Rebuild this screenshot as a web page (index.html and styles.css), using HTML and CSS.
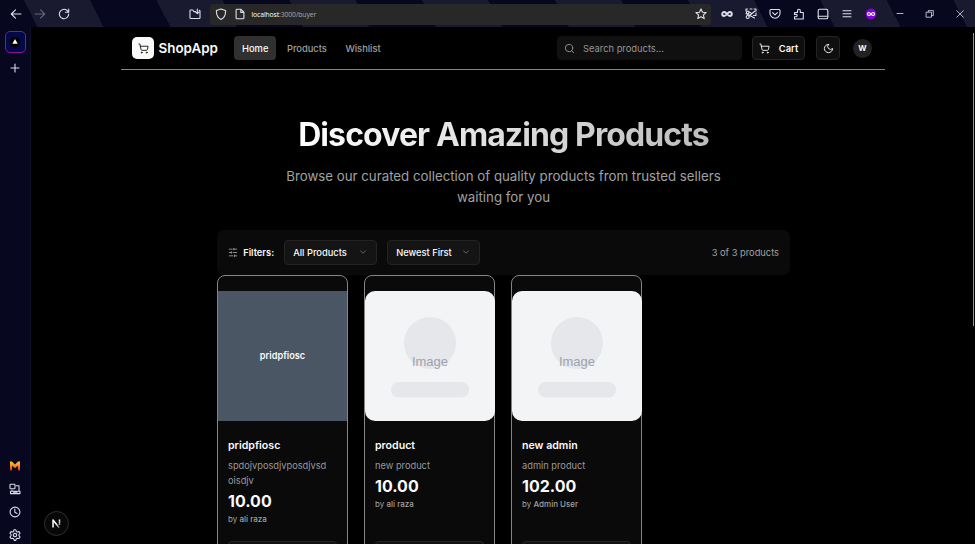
FILE: index.html
```html
<!DOCTYPE html>
<html lang="en">
<head>
<meta charset="utf-8">
<title>ShopApp</title>
<link rel="stylesheet" href="styles.css">
</head>
<body>
<div class="browser">
  <div class="toolbar">
    <div class="stripes"></div>
    <div class="nav-buttons">
      <svg class="ic" viewBox="0 0 12 12"><path d="M11 6H1.3M5.500 1.800 1.300 6l4.200 4.200"/></svg>
      <svg class="ic dim" viewBox="0 0 12 12"><path d="M1 6h9.700M6.500 1.800 10.700 6 6.500 10.200"/></svg>
      <svg class="ic" viewBox="0 0 12 12"><path d="M10.700 6A4.700 4.700 0 1 1 9 2.400L10.500 4M10.700 1v3.300H7.400"/></svg>
    </div>
    <svg class="ic folder" viewBox="0 0 12 12"><path d="M6.500 3.600H5L3.800 2H1.600q-.6 0-.6.7v7q0 .8.8.8h8.400q.8 0 .8-.8V3.200q0-.8-.8-.8M8.300 1v4.500M6.700 4.100l1.600 1.600 1.600-1.600"/></svg>
    <div class="address">
      <svg class="ic" viewBox="0 0 12 12"><path d="M6 .9 10.600 2.500C10.700 6.500 9.500 9.700 6 11.400 2.500 9.700 1.300 6.500 1.400 2.500z"/></svg>
      <svg class="ic" viewBox="0 0 12 12"><path d="M3 1.300h4L9.900 4.200v5.700q0 .9-.9.900H3q-.9 0-.9-.9V2.200q0-.9.900-.9zM6.800 1.500v2.900h2.900"/></svg>
      <span class="url"><b>localhost</b>:3000/buyer</span>
      <svg class="ic star" viewBox="0 0 12 12"><path d="m6 .9 1.500 3.300 3.600.4-2.700 2.400.8 3.600L6 8.800l-3.200 1.800.8-3.600L.9 4.600l3.600-.4z"/></svg>
    </div>
    <div class="extensions">
      <svg class="ic bold" viewBox="0 0 12 12"><path d="M6 6C4.600 4.300 4 4 3.200 4a2 2 0 0 0 0 4C4 8 4.600 7.700 6 6s2-2 2.800-2a2 2 0 0 1 0 4C8 8 7.400 7.700 6 6z"/></svg>
      <svg class="ic" viewBox="0 0 12 12"><path d="M2.500 1H1v2M5 1h2M9 1h2v2M11 5v2M1 5.500 9.500 10M4 8l6-5M4 4l2 1M8.500 7.500H11"/><circle cx="2.700" cy="4.400" r="1.300"/><circle cx="2.700" cy="9" r="1.500"/></svg>
      <svg class="ic" viewBox="0 0 12 12"><path d="M2 1.500h8q1 0 1 1v2.700a5 5 0 0 1-10 0V2.500q0-1 1-1zM3.600 4.600 6 6.900l2.400-2.300"/></svg>
      <svg class="ic" viewBox="0 0 12 12"><path d="M1.500 4.500h3V2.700a1.400 1.400 0 0 1 2.800 0v1.800h3V11H1.500V8.800H3a1.200 1.200 0 0 0 0-2.400H1.500z"/></svg>
      <svg class="ic" viewBox="0 0 12 12"><rect x="1.200" y="1.200" width="9.600" height="9.600" rx="1.300"/><path d="M1.200 8.200h9.600"/></svg>
      <svg class="ic" viewBox="0 0 12 12"><path d="M2 2.700h8M2 5.700h8M2 8.700h8"/></svg>
      <svg class="ic badge" viewBox="0 0 12 12"><circle class="purple" cx="6" cy="6" r="5.400"/><path d="M6 6C5 4.800 4.600 4.500 4 4.500a1.500 1.500 0 0 0 0 3C4.600 7.500 5 7.200 6 6s1.400-1.500 2-1.500a1.500 1.500 0 0 1 0 3C7.400 7.500 7 7.200 6 6z"/></svg>
    </div>
    <div class="window-buttons">
      <svg class="ic" viewBox="0 0 12 12"><path d="M3 5.500h6"/></svg>
      <svg class="ic" viewBox="0 0 12 12"><path d="M2.500 4.200h5v5h-5zM4.300 4V2.600h5v5H7.700"/></svg>
      <svg class="ic" viewBox="0 0 12 12"><path d="m2.800 2.700 6.500 6.500m0-6.500L2.800 9.200"/></svg>
    </div>
  </div>
  <div class="main">
    <aside class="sidebar">
      <div class="tab"><svg viewBox="0 0 12 12"><circle cx="6" cy="6" r="5.300"/><path d="m6 3 2.700 4.700H3.300z"/></svg></div>
      <svg class="ic plus" viewBox="0 0 12 12"><path d="M6 2v8M2 6h8"/></svg>
      <div class="tools">
        <svg class="mark" viewBox="0 0 12 12"><defs><linearGradient id="fire" x2="0" y2="1"><stop stop-color="#ffc629"/><stop offset=".5" stop-color="#ff8b22"/><stop offset="1" stop-color="#dc2518"/></linearGradient></defs><path d="M1 1.500h1.900L6 4.600l3.100-3.100H11v9H8.900V5.600L6 8.300 3.100 5.600v4.900H1z"/></svg>
        <svg class="ic" viewBox="0 0 12 12"><rect x="1" y="1.300" width="5" height="4.500" rx=".7"/><path d="M7.200 2.700H10v5.500H3V7M1.500 8.200v2.400H11V8.200zM4.500 9.300h3.500"/></svg>
        <svg class="ic" viewBox="0 0 12 12"><circle cx="6" cy="6" r="4.900"/><path d="M5.800 3v3.300L8 7.500"/></svg>
        <svg class="ic" viewBox="0 0 12 12"><path d="m4.800 1 .4-.2h1.600l.5 1.600 1.100.6 1.600-.4 1 1.700L9.900 5.500v1.200L11 7.900l-.9 1.600-1.700-.3-1.100.6-.5 1.600H5.200l-.5-1.600-1.100-.6-1.700.3L1 7.900l1.100-1.200V5.500L1 4.300l1-1.700 1.600.4 1.100-.6z"/><circle cx="6" cy="6.100" r="1.700"/></svg>
      </div>
    </aside>
    <div class="page">
      <header class="header">
        <div class="logo"><svg class="cart" viewBox="0 0 24 24"><circle cx="8" cy="21" r="1"/><circle cx="19" cy="21" r="1"/><path d="M2.050 2.050h2l2.660 12.420a2 2 0 0 0 2 1.580h9.780a2 2 0 0 0 1.950-1.570l1.650-7.430H5.120"/></svg></div>
        <span class="brand">ShopApp</span>
        <nav class="links"><a class="active">Home</a><a>Products</a><a>Wishlist</a></nav>
        <div class="search"><svg viewBox="0 0 24 24"><circle cx="11" cy="11" r="8"/><path d="m21 21-4.300-4.300"/></svg><span>Search products...</span></div>
        <div class="button cart-button"><svg class="cart" viewBox="0 0 24 24"><circle cx="8" cy="21" r="1"/><circle cx="19" cy="21" r="1"/><path d="M2.050 2.050h2l2.660 12.420a2 2 0 0 0 2 1.580h9.780a2 2 0 0 0 1.950-1.570l1.650-7.430H5.120"/></svg><span>Cart</span></div>
        <div class="button theme"><svg viewBox="0 0 24 24"><path d="M12 3a6 6 0 0 0 9 9 9 9 0 1 1-9-9Z"/></svg></div>
        <div class="avatar">W</div>
      </header>
      <section class="hero">
        <h1>Discover Amazing Products</h1>
        <p>Browse our curated collection of quality products from trusted sellers<br>waiting for you</p>
      </section>
      <section class="catalog">
        <div class="filters">
          <svg class="sliders" viewBox="0 0 24 24"><path d="M21 4h-7M10 4H3M21 12h-9M8 12H3M21 20h-5M12 20H3M14 2v4M8 10v4M16 18v4"/></svg>
          <span class="filter-label">Filters:</span>
          <div class="select"><span>All Products</span><svg viewBox="0 0 24 24"><path d="m6 9 6 6 6-6"/></svg></div>
          <div class="select"><span>Newest First</span><svg viewBox="0 0 24 24"><path d="m6 9 6 6 6-6"/></svg></div>
          <span class="count">3 of 3 products</span>
        </div>
        <div class="grid">
          <article class="card">
            <div class="image named">pridpfiosc</div>
            <div class="info"><h2>pridpfiosc</h2><p class="desc">spdojvposdjvposdjvsd<br>oisdjv</p><div class="price">10.00</div><p class="seller">by <b>ali raza</b></p></div>
            <div class="action"></div>
          </article>
          <article class="card">
            <svg class="image" viewBox="0 0 130 130"><rect class="tile" width="130" height="130" rx="10"/><circle cx="65" cy="52" r="26"/><rect x="26" y="91" width="78" height="15.600" rx="7.800"/><text x="65" y="75">Image</text></svg>
            <div class="info"><h2>product</h2><p class="desc">new product</p><div class="price">10.00</div><p class="seller">by <b>ali raza</b></p></div>
            <div class="action"></div>
          </article>
          <article class="card">
            <svg class="image" viewBox="0 0 130 130"><rect class="tile" width="130" height="130" rx="10"/><circle cx="65" cy="52" r="26"/><rect x="26" y="91" width="78" height="15.600" rx="7.800"/><text x="65" y="75">Image</text></svg>
            <div class="info"><h2>new admin</h2><p class="desc">admin product</p><div class="price">102.00</div><p class="seller">by <b>Admin User</b></p></div>
            <div class="action"></div>
          </article>
        </div>
      </section>
      <div class="dev-badge"><svg viewBox="0 0 12 12"><defs><linearGradient id="fade" x2="1" y2="1"><stop offset=".5" stop-color="#fff"/><stop offset="1" stop-color="#555"/></linearGradient></defs><path d="M2.800 9.600V2.700L8.500 10M8.800 2.300v5"/></svg></div>
      <div class="scrollbar"></div>
    </div>
  </div>
</div>
</body>
</html>
```
FILE: styles.css
```css
* { box-sizing: border-box; }
body { margin: 0; background: #000; color: #fafafa; font-family: Inter, "Liberation Sans", sans-serif; }
h1, h2, p { margin: 0; }
svg { display: block; fill: none; stroke: currentColor; stroke-width: 2; stroke-linecap: round; stroke-linejoin: round; flex: none; }
.browser { width: 975px; height: 544px; overflow: hidden; display: flex; flex-direction: column; }
.toolbar { height: 27px; flex: none; position: relative; overflow: hidden; display: flex; align-items: center; background: #070820; color: #dedfeb; padding-top: 1px; }
.stripes { position: absolute; inset: 0 0 0 -109px; transform: skewX(27deg); transform-origin: 0 0; background: repeating-linear-gradient(to right, #191a30 0 66px, #070820 66px 132.800px); }
.ic { width: 12px; height: 12px; stroke-width: 1.100; position: relative; }
.dim { color: #63657a; }
.nav-buttons { display: flex; gap: 12px; padding-left: 10px; }
.folder { margin-left: 119px; }
.address { position: relative; width: 501px; height: 21px; margin-left: 9px; padding: 0 4px 0 5px; border-radius: 3px; background: #282828; display: flex; align-items: center; gap: 6.500px; }
.url { font: 6.800px "Open Sans", sans-serif; letter-spacing: -.1px; color: #a8a8a8; margin-left: -.5px; }
.url b { font-weight: 400; color: #fff; }
.star { margin-left: auto; }
.extensions { display: flex; gap: 12px; margin-left: 9.500px; }
.bold { stroke-width: 1.900; }
.badge { stroke: #fff; stroke-width: 1.200; }
.purple { fill: #8000df; stroke: none; }
.window-buttons { display: flex; gap: 18.300px; margin-left: 17.300px; }
.window-buttons .ic { stroke-width: .8; }
.main { display: flex; flex: 1; min-height: 0; }
.sidebar { width: 31px; background: #070820; border-right: 1px solid #0e1029; color: #d9daed; display: flex; flex-direction: column; align-items: center; padding: 4px 0 0 .4px; }
.tab { width: 21px; height: 22px; border: 1px solid #85169a; border-radius: 5px; background: #020848; display: grid; place-items: center; }
.tab svg { width: 12px; height: 12px; stroke: none; }
.tab circle { fill: #000; }
.tab path { fill: #fff; }
.plus { margin-top: 9px; }
.tools { margin-top: auto; display: flex; flex-direction: column; gap: 11px; padding-bottom: 3px; }
.mark { width: 12px; height: 12px; stroke: none; fill: url(#fire); }
.page { flex: 1; position: relative; overflow: hidden; background: #000; }
.header { margin-left: 90px; width: 764px; height: 43px; border-bottom: 1px solid #858585; padding-left: 11px; display: flex; align-items: center; }
.logo { width: 22px; height: 22px; border-radius: 5px; background: #fafafa; color: #171717; display: grid; place-items: center; }
.cart { width: 11px; height: 11px; }
.brand { margin-left: 4.500px; width: 60.500px; font-size: 13.400px; font-weight: 600; white-space: nowrap; }
.links { margin-left: 15px; display: flex; width: 162px; font-size: 9.350px; font-weight: 500; color: #a1a1a1; }
.links a { height: 24px; padding: 0 8px; line-height: 25px; margin-right: 2.500px; border-radius: 4px; }
.links .active { background: #303030; color: #fafafa; }
.search { margin-left: 161px; width: 185px; height: 24px; padding-left: 7px; border-radius: 4px; background: #101010; color: #969696; font-size: 9.350px; display: flex; align-items: center; gap: 8px; flex: none; }
.search svg { width: 11px; height: 11px; }
.button { height: 24px; border: 1px solid #242424; border-radius: 4px; background: #0f0f0f; display: flex; align-items: center; justify-content: center; font-size: 9.300px; font-weight: 600; flex: none; }
.cart-button { width: 53px; margin-left: 10px; gap: 9px; }
.theme { width: 24px; margin-left: 11px; }
.theme svg { width: 11px; height: 11px; }
.avatar { width: 19px; height: 19px; border-radius: 50%; margin-left: 13px; background: #222; display: grid; place-items: center; font-size: 8px; font-weight: 700; }
.hero { width: 573px; margin: 44px 0 0 186px; text-align: center; }
h1 { font-size: 32px; line-height: 42px; font-weight: 700; letter-spacing: -.9px; white-space: nowrap; width: max-content; margin: 0 auto; background: linear-gradient(90deg, #fff, #bdbdbd); background-clip: text; color: transparent; }
.hero p { margin-top: 10px; font-size: 13.270px; line-height: 21.400px; color: #a1a1a1; white-space: nowrap; }
.catalog { width: 573px; margin: 21px 0 0 186px; }
.filters { height: 45px; border-radius: 7px; background: #0a0a0a; display: flex; align-items: center; padding: 0 11px; font-size: 9.300px; }
.sliders { width: 10px; height: 11px; color: #a1a1a1; }
.filter-label { width: 32px; margin-left: 5.200px; font-weight: 600; white-space: nowrap; }
.select { width: 93px; height: 25px; margin-left: 9px; padding: 0 8px; border: 1px solid #232323; border-radius: 4px; background: #141414; display: flex; align-items: center; justify-content: space-between; font-weight: 500; white-space: nowrap; }
.select + .select { margin-left: 10px; }
.select svg { width: 10px; height: 10px; color: #777; }
.count { margin-left: auto; color: #a1a1a1; }
.grid { display: grid; grid-template-columns: repeat(3, 131px); column-gap: 16px; }
.card { height: 300px; border: 1px solid #858585; border-radius: 8px; background: #0a0a0a; padding-top: 15px; }
.image { width: 130px; height: 130px; margin-left: -.5px; stroke: none; fill: #e5e7eb; }
.image .tile { fill: #f3f4f6; }
.image text { font: 13px "Liberation Sans", sans-serif; fill: #9ca3af; text-anchor: middle; }
.named { width: 129px; margin-left: 0; background: #4b5665; display: grid; place-items: center; font-size: 9.200px; font-weight: 600; }
.info { padding: 17px 10px 0; height: 120px; }
h2 { font-size: 10.600px; line-height: 15px; font-weight: 600; }
.desc { margin-top: 5px; font-size: 9.270px; line-height: 15.400px; color: #999; white-space: nowrap; }
.price { font-size: 16px; line-height: 22px; font-weight: 700; margin-top: 1.700px; }
.seller { font-size: 8px; line-height: 15px; color: #a1a1a1; white-space: nowrap; }
.seller b { font-weight: 500; }
.action { height: 24px; margin: 0 10px; border: 1px solid #242424; border-radius: 4px; background: #111; }
.dev-badge { position: absolute; left: 13px; top: 484px; width: 25px; height: 25px; border: 1px solid #303030; border-radius: 50%; background: #080808; display: grid; place-items: center; }
.dev-badge svg { width: 13px; height: 13px; stroke: url(#fade); stroke-width: 1.400; stroke-linecap: butt; }
.scrollbar { position: absolute; right: 1px; top: 6px; width: 1px; height: 293px; background: #949494; }
```
